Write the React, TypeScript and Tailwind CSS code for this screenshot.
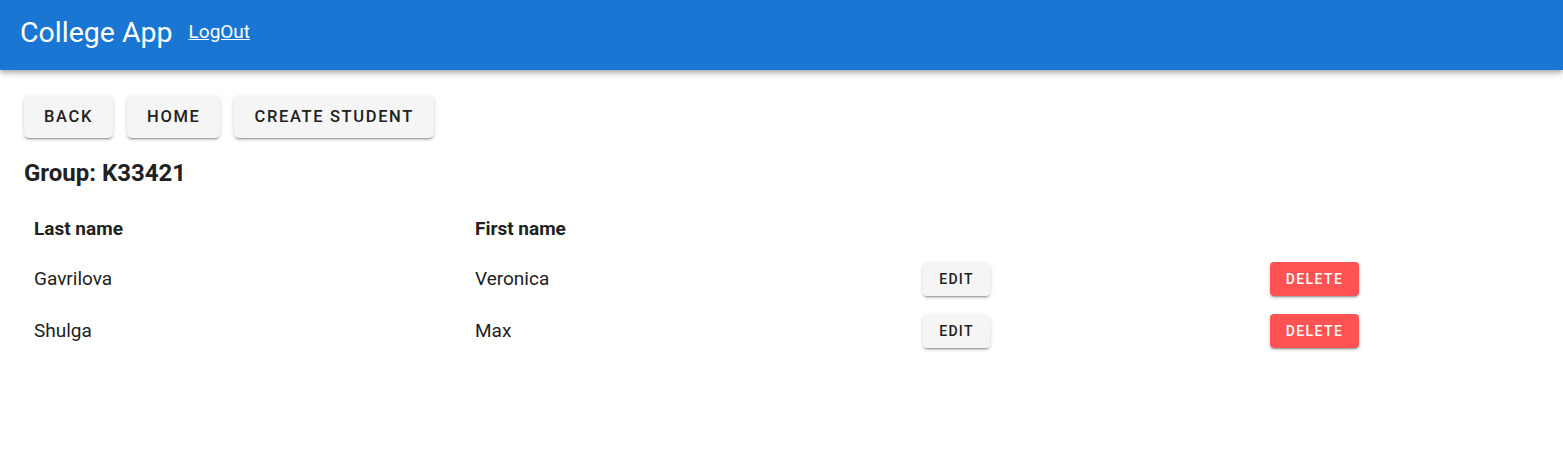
import React from 'react';

const students = [
    {id: 1, last_name: 'Gavrilova', first_name: 'Veronica'},
    {id: 2, last_name: 'Shulga', first_name: 'Max'},
];

function NavButton({label}: {label: string}) {
    return (
        <button
            className="h-[42px] px-[20px] rounded-[5px] bg-[#f5f5f5] text-[#212121] text-[16.5px] font-medium uppercase tracking-[0.1em] shadow-[0_3px_1px_-2px_rgba(0,0,0,0.2),0_2px_2px_0_rgba(0,0,0,0.14),0_1px_5px_0_rgba(0,0,0,0.12)]">
            {label}
        </button>
    );
}

export default function App() {
    return (
        <div className="min-h-[473px] bg-white text-[#212121]" style={{fontFamily: 'Roboto, "Liberation Sans", sans-serif'}}>
            <header
                className="h-[70px] bg-[#1976d2] flex items-center px-5 shadow-[0_2px_4px_-1px_rgba(0,0,0,0.2),0_4px_5px_0_rgba(0,0,0,0.14),0_1px_10px_0_rgba(0,0,0,0.12)]">
                <div className="text-white text-[28.5px] leading-none -mt-[4px]">College App</div>
                <a href="#" className="ml-[16px] -mt-[6px] text-white text-[19px] underline">LogOut</a>
            </header>

            <main className="px-6 pt-[26px]">
                <div className="flex gap-[14px]">
                    <NavButton label="Back"/>
                    <NavButton label="Home"/>
                    <NavButton label="Create student"/>
                </div>

                <h2 className="mt-[20px] text-[24px] font-bold leading-[30px]">Group: K33421</h2>

                <table className="mt-[17px] w-[1515px] border-collapse">
                    <thead>
                    <tr className="h-[48px] text-left">
                        <th className="w-[451px] px-[10px] text-[19px] font-bold">Last name</th>
                        <th className="w-[448px] px-0 text-[19px] font-bold">First name</th>
                        <th className="w-[347px]"></th>
                        <th></th>
                    </tr>
                    </thead>
                    <tbody>
                    {students.map((student) => (
                        <tr key={student.id} className="h-[52px] text-[19px]">
                            <td className="px-[10px]">{student.last_name}</td>
                            <td>{student.first_name}</td>
                            <td>
                                <button
                                    className="h-[33px] w-[67px] rounded-[4px] bg-[#f5f5f5] text-[14px] font-medium tracking-[0.09em] shadow-[0_3px_1px_-2px_rgba(0,0,0,0.2),0_2px_2px_0_rgba(0,0,0,0.14),0_1px_5px_0_rgba(0,0,0,0.12)]">
                                    EDIT
                                </button>
                            </td>
                            <td>
                                <button
                                    className="h-[34px] w-[89px] rounded-[4px] bg-[#ff5252] text-white text-[14px] font-medium tracking-[0.1em] shadow-[0_3px_1px_-2px_rgba(0,0,0,0.2),0_2px_2px_0_rgba(0,0,0,0.14),0_1px_5px_0_rgba(0,0,0,0.12)]">
                                    DELETE
                                </button>
                            </td>
                        </tr>
                    ))}
                    </tbody>
                </table>
            </main>
        </div>
    );
}
